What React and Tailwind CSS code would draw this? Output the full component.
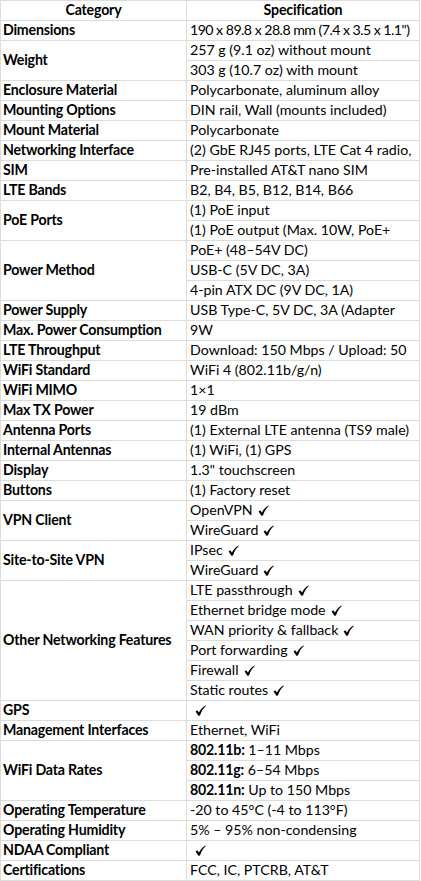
import React from "react";

function Check() {
  return (
    <svg width="11" height="11" viewBox="0 0 11 11" className="inline-block ml-[5px] -mt-[3px] align-middle">
      <path d="M0.6 6.4 L2.2 5.3 L3.9 7.4 C5.4 4.5 7.6 2 10.6 0.4 L10.9 1 C8.4 3 6.4 6 5 10.6 L3.4 10.8 Z" fill="#000" />
    </svg>
  );
}

const rows = [
  ["Dimensions", [{ t: '190 x 89.8 x 28.8 mm (7.4 x 3.5 x 1.1")', tight: true }]],
  ["Weight", ["257 g (9.1 oz) without mount", "303 g (10.7 oz) with mount"]],
  ["Enclosure Material", ["Polycarbonate, aluminum alloy"]],
  ["Mounting Options", ["DIN rail, Wall (mounts included)"]],
  ["Mount Material", ["Polycarbonate"]],
  ["Networking Interface", ["(2) GbE RJ45 ports, LTE Cat 4 radio,"]],
  ["SIM", ["Pre-installed AT&T nano SIM"]],
  ["LTE Bands", ["B2, B4, B5, B12, B14, B66"]],
  ["PoE Ports", ["(1) PoE input", "(1) PoE output (Max. 10W, PoE+"]],
  ["Power Method", ["PoE+ (48–54V DC)", "USB-C (5V DC, 3A)", "4-pin ATX DC (9V DC, 1A)"]],
  ["Power Supply", ["USB Type-C, 5V DC, 3A (Adapter"]],
  ["Max. Power Consumption", ["9W"]],
  ["LTE Throughput", ["Download: 150 Mbps / Upload: 50"]],
  ["WiFi Standard", ["WiFi 4 (802.11b/g/n)"]],
  ["WiFi MIMO", ["1×1"]],
  ["Max TX Power", ["19 dBm"]],
  ["Antenna Ports", ["(1) External LTE antenna (TS9 male)"]],
  ["Internal Antennas", ["(1) WiFi, (1) GPS"]],
  ["Display", ['1.3" touchscreen']],
  ["Buttons", ["(1) Factory reset"]],
  ["VPN Client", [{ t: "OpenVPN", c: true }, { t: "WireGuard", c: true }]],
  ["Site-to-Site VPN", [{ t: "IPsec", c: true }, { t: "WireGuard", c: true }]],
  [
    "Other Networking Features",
    [
      { t: "LTE passthrough", c: true },
      { t: "Ethernet bridge mode", c: true },
      { t: "WAN priority & fallback", c: true },
      { t: "Port forwarding", c: true },
      { t: "Firewall", c: true },
      { t: "Static routes", c: true },
    ],
  ],
  ["GPS", [{ t: "", c: true }]],
  ["Management Interfaces", ["Ethernet, WiFi"]],
  [
    "WiFi Data Rates",
    [
      { b: "802.11b:", t: " 1–11 Mbps" },
      { b: "802.11g:", t: " 6–54 Mbps" },
      { b: "802.11n:", t: " Up to 150 Mbps" },
    ],
  ],
  ["Operating Temperature", ["-20 to 45°C (-4 to 113°F)"]],
  ["Operating Humidity", ["5% – 95% non-condensing"]],
  ["NDAA Compliant", [{ t: "", c: true }]],
  ["Certifications", ["FCC, IC, PTCRB, AT&T"]],
];

function Line({ item }) {
  if (typeof item === "string") return <span>{item}</span>;
  return (
    <span className={`whitespace-pre ${item.tight ? "tracking-[-0.55px]" : ""}`}>
      {item.b && <b className="font-bold tracking-[-0.2px]">{item.b}</b>}
      {item.t}
      {item.c && <Check />}
    </span>
  );
}

export default function App() {
  return (
    <div
      className="w-[421px] h-[881px] bg-white text-black text-[14.2px] leading-none overflow-hidden"
      style={{ fontFamily: "Lato, 'Open Sans', sans-serif" }}
    >
      <div className="border-l border-t border-[#dcdcdc] w-[420px]">
        <div className="flex h-[20px] border-b border-[#dcdcdc] font-bold tracking-[-0.2px]">
          <div className="w-[186px] shrink-0 border-r border-[#dcdcdc] flex items-center justify-center">Category</div>
          <div className="flex-1 min-w-0 border-r border-[#dcdcdc] flex items-center justify-center">Specification</div>
        </div>
        {rows.map(([cat, vals]) => (
          <div key={cat} className="flex">
            <div className="w-[186px] shrink-0 border-r border-b border-[#dcdcdc] flex items-center pl-[2px] font-bold tracking-[-0.2px]">
              {cat}
            </div>
            <div className="flex-1 min-w-0 flex flex-col">
              {vals.map((v, i) => (
                <div
                  key={i}
                  className="h-[20px] border-r border-b border-[#dcdcdc] flex items-center pl-[3px] whitespace-nowrap overflow-hidden"
                >
                  <Line item={v} />
                </div>
              ))}
            </div>
          </div>
        ))}
      </div>
    </div>
  );
}
